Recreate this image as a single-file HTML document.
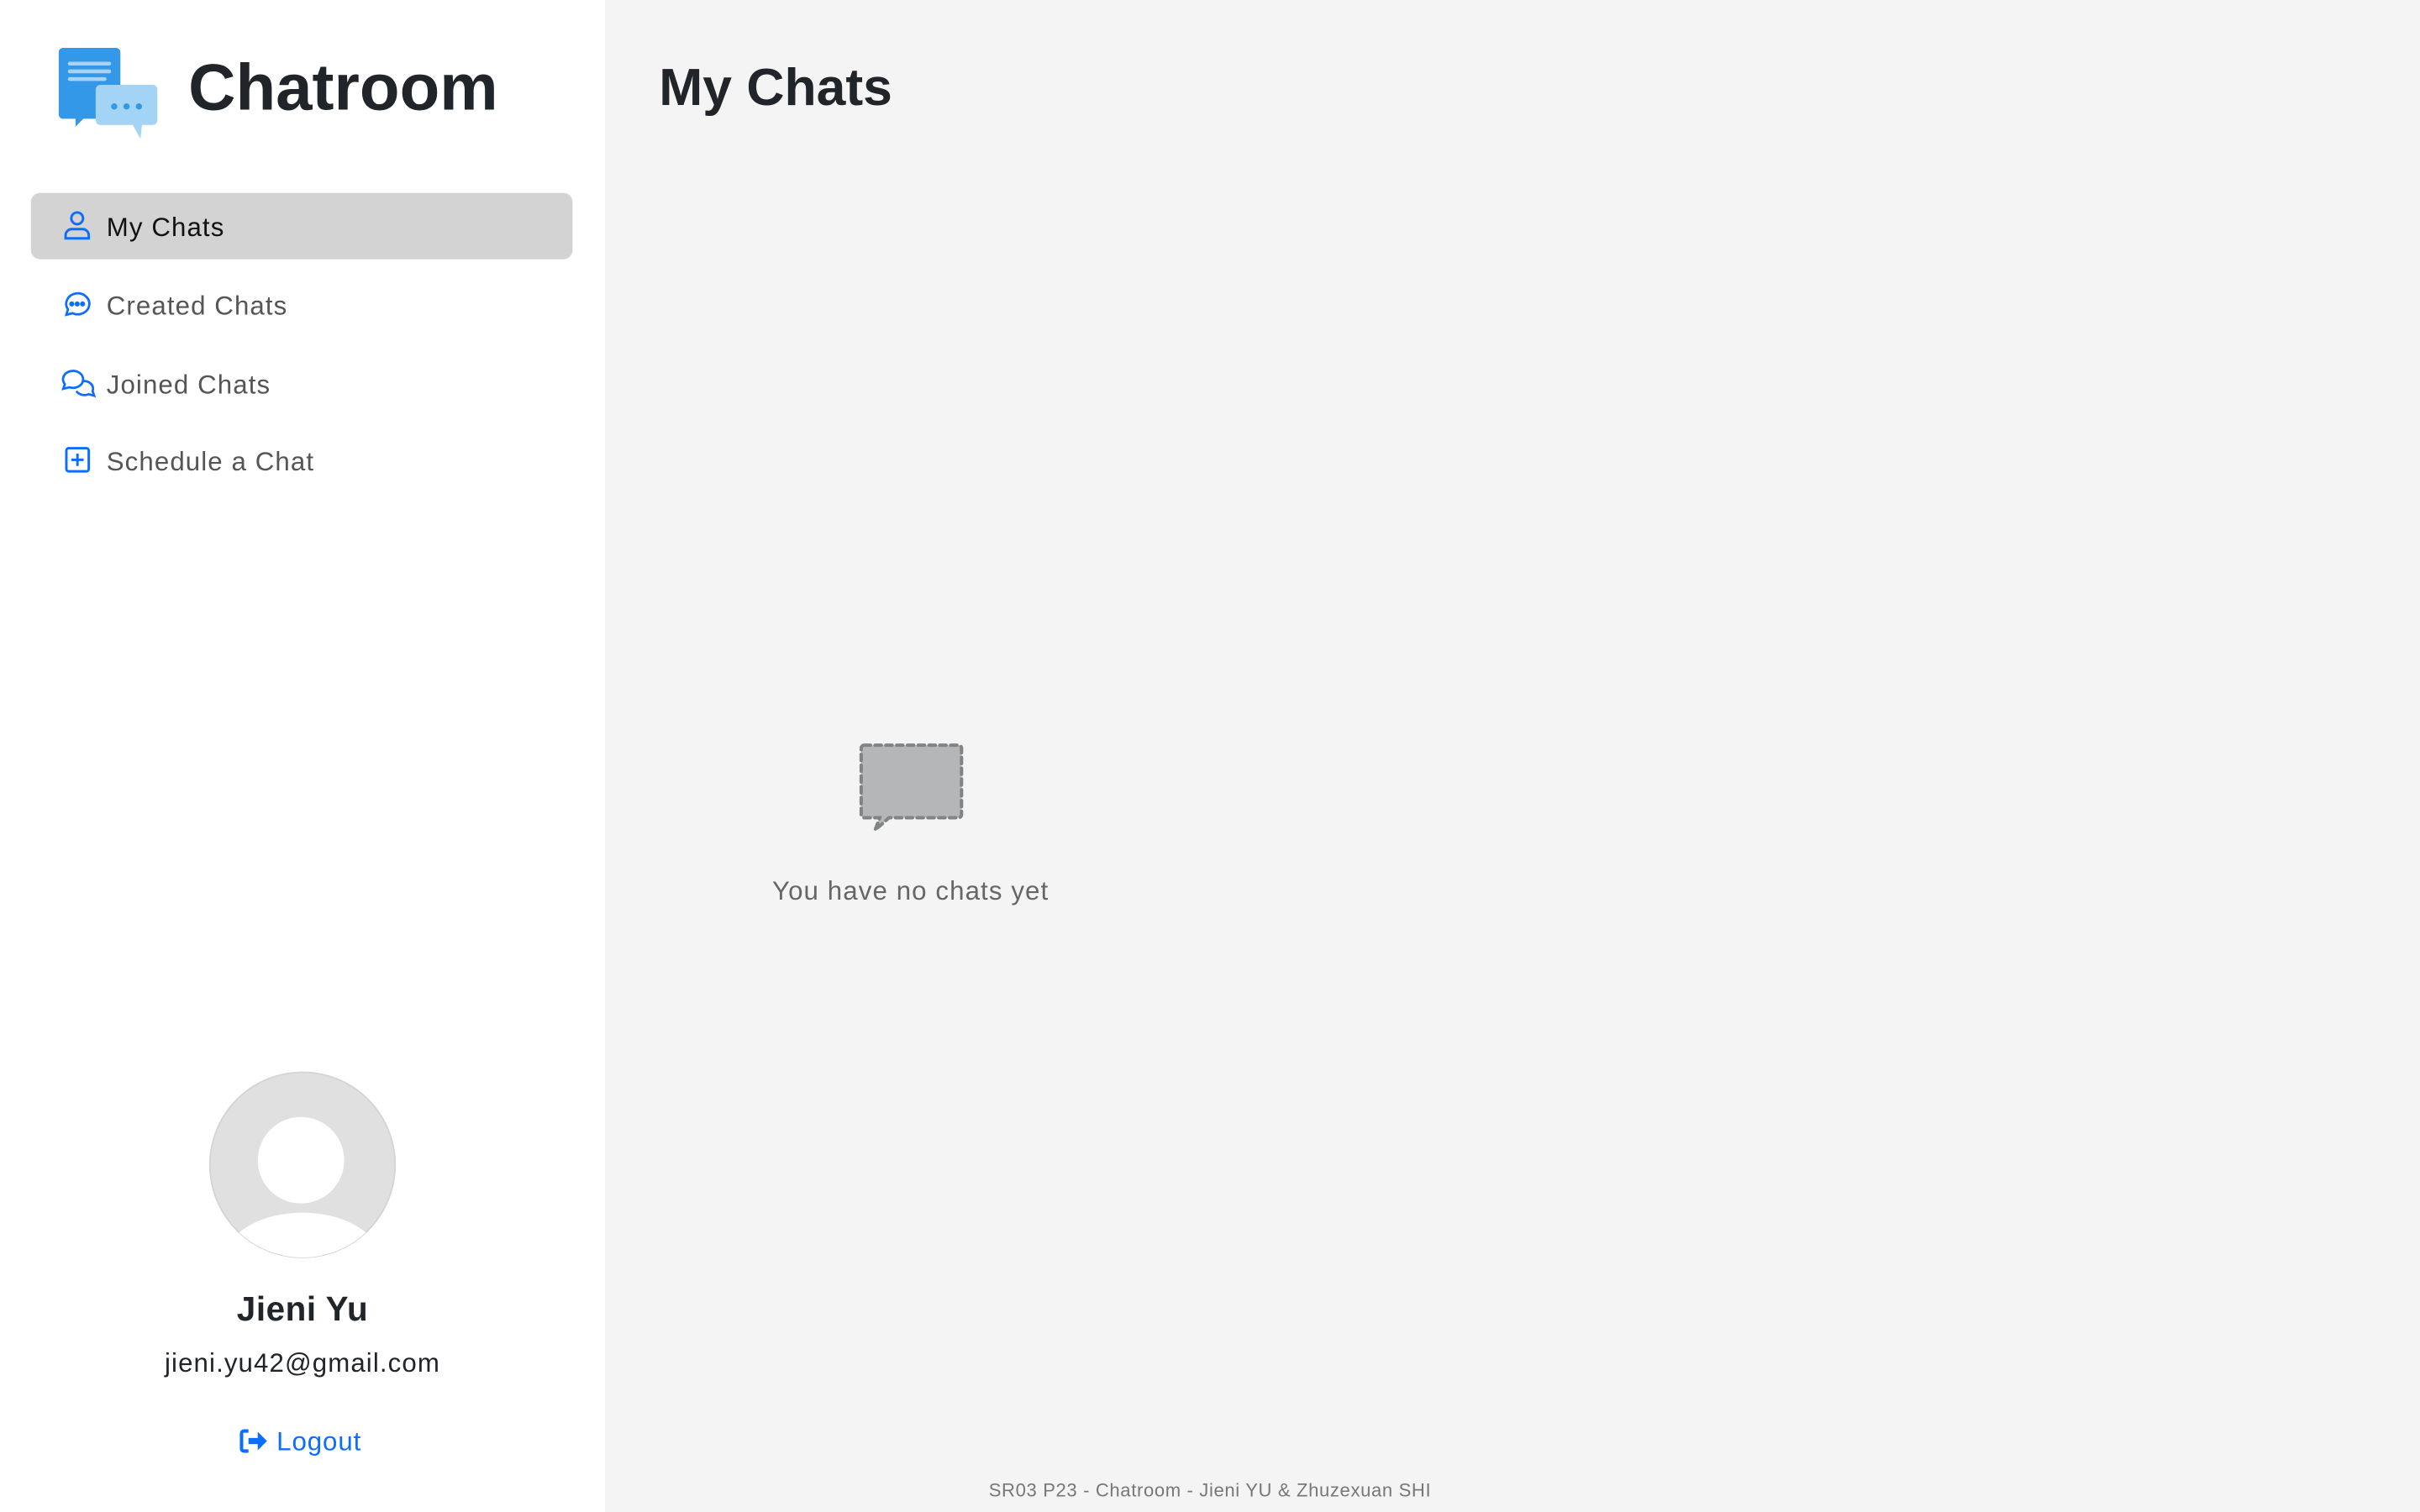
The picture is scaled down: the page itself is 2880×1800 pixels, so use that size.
<!DOCTYPE html>
<html><head><meta charset="utf-8"><style>
html,body{margin:0;padding:0;width:2880px;height:1800px;overflow:hidden;background:#f4f4f4;}
#w{position:absolute;left:0;top:0;width:1568px;height:980px;transform:scale(1.836735);transform-origin:0 0;font-family:"Liberation Sans",sans-serif;}
.sb{position:absolute;left:0;top:0;width:392px;height:980px;background:#fff;}
.t{position:absolute;white-space:nowrap;}
.nav{position:absolute;left:20px;width:351px;height:43px;border-radius:6px;}
.nav span{position:absolute;left:49px;top:13px;font-size:17px;color:#555;letter-spacing:0.6px;}
.nav svg{position:absolute;left:20px;top:11px;}
</style></head><body><div id="w">
<div class="sb">
<svg style="position:absolute;left:38px;top:31px" width="64" height="60" viewBox="0 0 64 60">
<path d="M3 0h34a3 3 0 0 1 3 3v40a3 3 0 0 1-3 3H16l-5 5 0-5H3a3 3 0 0 1-3-3V3a3 3 0 0 1 3-3z" fill="#3498e8"/>
<rect x="6" y="9" width="28" height="2.5" rx="1.2" fill="#a9d3f5"/><rect x="6" y="14" width="28" height="2.5" rx="1.2" fill="#a9d3f5"/><rect x="6" y="19" width="25" height="2.5" rx="1.2" fill="#a9d3f5"/>
<path d="M27 24h34a3 3 0 0 1 3 3v20a3 3 0 0 1-3 3H54l-1 9-5-9H27a3 3 0 0 1-3-3V27a3 3 0 0 1 3-3z" fill="#a3d4f6"/>
<circle cx="36" cy="38" r="2" fill="#3498e8"/><circle cx="44" cy="38" r="2" fill="#3498e8"/><circle cx="52" cy="38" r="2" fill="#3498e8"/>
</svg>
<div class="t" style="left:122px;top:34px;font-size:42.5px;font-weight:bold;color:#212529;">Chatroom</div>
<div class="nav" style="top:125px;background:#d3d3d3;"><svg width="20" height="20" viewBox="0 0 20 20" fill="none" stroke="#0d6efd" stroke-width="1.6"><circle cx="10" cy="5.5" r="3.8"/><path d="M2.5 18.5v-2a4 4 0 0 1 4-4h7a4 4 0 0 1 4 4v2z"/></svg><span style="color:#111">My Chats</span></div>
<div class="nav" style="top:176px;"><svg width="20" height="20" viewBox="0 0 20 20" fill="none" stroke="#0d6efd" stroke-width="1.5"><path d="M3 17l1-3.5A7.5 6.8 0 1 1 7 16z"/><circle cx="6.5" cy="10" r=".9" fill="#0d6efd"/><circle cx="10" cy="10" r=".9" fill="#0d6efd"/><circle cx="13.5" cy="10" r=".9" fill="#0d6efd"/></svg><span>Created Chats</span></div>
<div class="nav" style="top:227px;"><svg style="left:19px" width="24" height="20" viewBox="0 0 24 20" fill="none" stroke="#0d6efd" stroke-width="1.5"><path d="M2 14l1-3A6.5 5.5 0 1 1 6 13z"/><path d="M14.5 9a6 5 0 0 1 6.5 6.5l1 3-3.5-1a6 5 0 0 1-8-2"/></svg><span>Joined Chats</span></div>
<div class="nav" style="top:277px;"><svg width="20" height="20" viewBox="0 0 20 20" fill="none" stroke="#0d6efd" stroke-width="1.6"><rect x="3" y="2.5" width="14.5" height="15" rx="1.5"/><path d="M10.2 6v8M6.2 10h8"/></svg><span>Schedule a Chat</span></div>
<svg style="position:absolute;left:135px;top:694px" width="122" height="122" viewBox="0 0 122 122"><defs><clipPath id="c"><circle cx="61" cy="61" r="60"/></clipPath></defs><circle cx="61" cy="61" r="60" fill="#e0e0e0" stroke="#d4d4d4"/><g clip-path="url(#c)"><circle cx="60" cy="58" r="28" fill="#fff"/><ellipse cx="61" cy="122" rx="50" ry="30" fill="#fff"/></g></svg>
<div class="t" style="left:0;width:392px;text-align:center;top:836px;font-size:22px;font-weight:bold;color:#212529;letter-spacing:0.3px;">Jieni Yu</div>
<div class="t" style="left:0;width:392px;text-align:center;top:874px;font-size:17px;color:#212529;letter-spacing:0.6px;">jieni.yu42@gmail.com</div>
<div class="t" style="left:155px;top:925px;font-size:17px;color:#0d6efd;letter-spacing:0.5px;"><svg width="19" height="16" viewBox="0 0 19 16" style="vertical-align:-2px"><path d="M6 1.5H3a1.5 1.5 0 0 0-1.5 1.5v10A1.5 1.5 0 0 0 3 14.5h3" fill="none" stroke="#0d6efd" stroke-width="2.2"/><path d="M6 6h6V2l6 6-6 6v-4H6z" fill="#0d6efd"/></svg> Logout</div>
</div>
<div class="t" style="left:427px;top:38px;font-size:34px;font-weight:bold;color:#212529;">My Chats</div>
<svg style="position:absolute;left:556px;top:481px" width="70" height="60" viewBox="0 0 70 60"><path d="M4 2h61a2 2 0 0 1 2 2v43a2 2 0 0 1-2 2H20l-9 8 3-8H4a2 2 0 0 1-2-2V4a2 2 0 0 1 2-2z" fill="#b4b6b7" stroke="#808486" stroke-width="2.2" stroke-dasharray="4 3" stroke-linecap="round"/></svg>
<div class="t" style="left:440px;width:300px;text-align:center;top:568px;font-size:17px;color:#666;letter-spacing:0.6px;">You have no chats yet</div>
<div class="t" style="left:392px;width:784px;text-align:center;top:959px;font-size:12px;color:#777;letter-spacing:0.35px;">SR03 P23 - Chatroom - Jieni YU &amp; Zhuzexuan SHI</div>
</div></body></html>
